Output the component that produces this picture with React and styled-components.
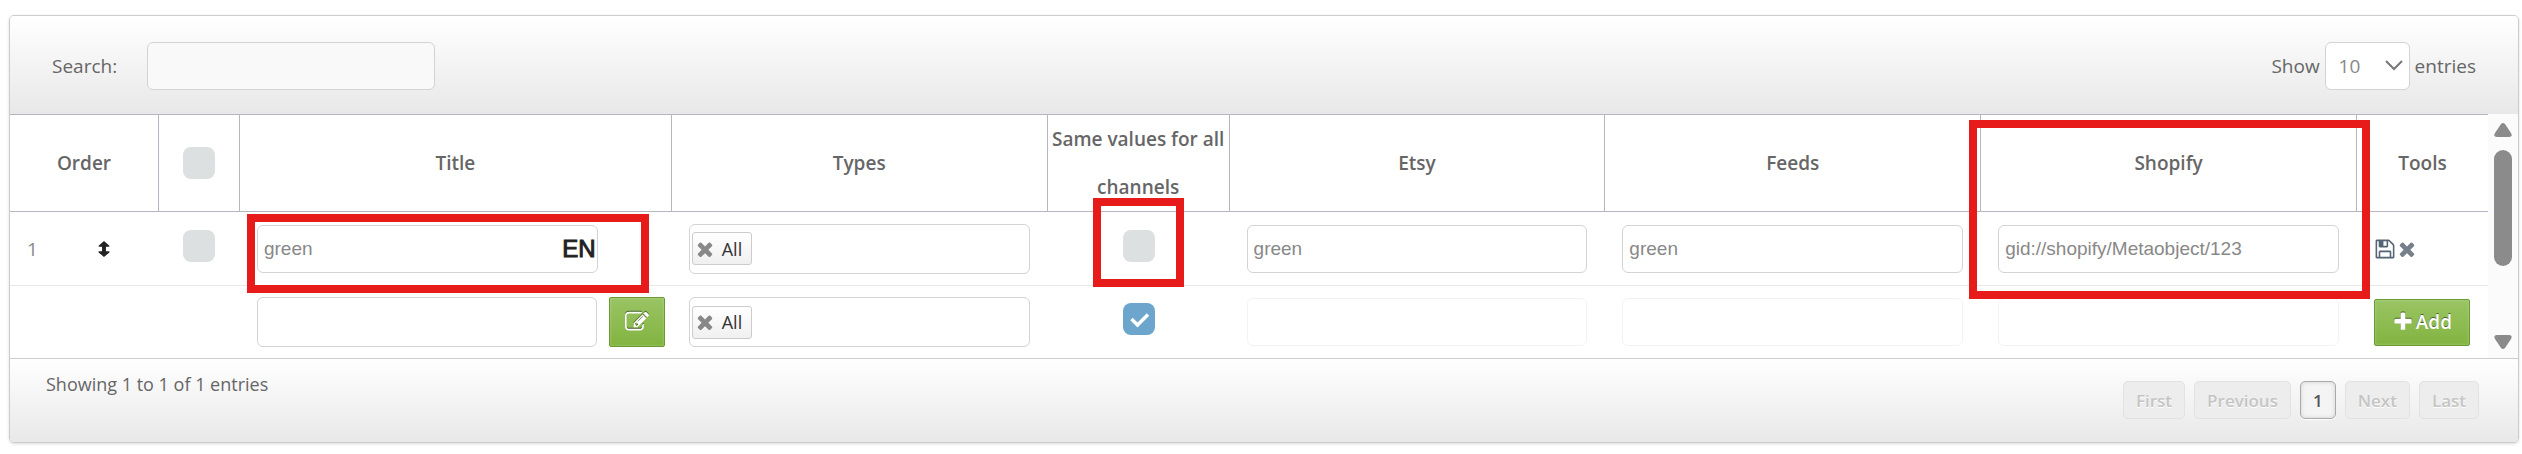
import React from "react";
import styled, { createGlobalStyle, css } from "styled-components";

const icons = {
  remove:
    "M1490 1322q0 40-28 68l-136 136q-28 28-68 28t-68-28l-294-294-294 294q-28 28-68 28t-68-28l-136-136q-28-28-28-68t28-68l294-294-294-294q-28-28-28-68t28-68l136-136q28-28 68-28t68 28l294 294 294-294q28-28 68-28t68 28l136 136q28 28 28 68t-28 68l-294 294 294 294q28 28 28 68z",
  save:
    "M512 1536h768v-384h-768v384zm896 0h128v-896q0-14-10-38.5t-20-34.5l-281-281q-10-10-34-20t-39-10v416q0 40-28 68t-68 28h-576q-40 0-68-28t-28-68v-416h-128v1280h128v-416q0-40 28-68t68-28h832q40 0 68 28t28 68v416zm-384-928v-320q0-13-9.5-22.5t-22.5-9.5h-192q-13 0-22.5 9.5t-9.5 22.5v320q0 13 9.5 22.5t22.5 9.5h192q13 0 22.5-9.5t9.5-22.5zm640 32v928q0 40-28 68t-68 28h-1344q-40 0-68-28t-28-68v-1344q0-40 28-68t68-28h928q40 0 88 20t76 48l280 280q28 28 48 76t20 88z",
  edit:
    "M888 1184l116-116-152-152-116 116v56h96v96h56zm440-720q-16-16-33 1l-350 350q-17 17-1 33t33-1l350-350q17-17 1-33zm80 594v190q0 119-84.5 203.5t-203.5 84.5h-832q-119 0-203.5-84.5t-84.5-203.5v-832q0-119 84.5-203.5t203.5-84.5h832q63 0 117 25 15 7 18 23 3 17-9 29l-49 49q-14 14-32 8-23-6-45-6h-832q-66 0-113 47t-47 113v832q0 66 47 113t113 47h832q66 0 113-47t47-113v-126q0-13 9-22l64-64q15-15 35-7t20 29zm-96-738l288 288-672 672h-288v-288zm444 132l-92 92-288-288 92-92q28-28 68-28t68 28l152 152q28 28 28 68t-28 68z",
  plus:
    "M1600 736v192q0 40-28 68t-68 28h-416v416q0 40-28 68t-68 28h-192q-40 0-68-28t-28-68v-416h-416q-40 0-68-28t-28-68v-192q0-40 28-68t68-28h416v-416q0-40 28-68t68-28h192q40 0 68 28t28 68v416h416q40 0 68 28t28 68z",
  move:
    "M896 96L1430 560Q1480 660 1380 670H1090V1122H1380Q1480 1132 1430 1232L896 1696L362 1232Q312 1132 412 1122H702V670H412Q312 660 362 560Z",
};

const Icon = ({ name, size = 22 }) => (
  <Glyph viewBox="0 0 1792 1792" $size={size} aria-hidden="true">
    <path d={icons[name]} fill="currentColor" stroke="currentColor" />
  </Glyph>
);

const TypesField = () => (
  <TagBox>
    <Tag>
      <RemoveTag type="button" aria-label="Remove All">
        <Icon name="remove" />
      </RemoveTag>
      All
    </Tag>
    <TagInput aria-label="Types" />
  </TagBox>
);

const App = () => (
  <Panel>
    <GlobalStyle />
    <Toolbar>
      <SearchLabel>
        Search:
        <SearchInput type="text" />
      </SearchLabel>
      <LengthLabel>
        Show
        <LengthSelect defaultValue="10">
          <option>10</option>
          <option>25</option>
          <option>50</option>
        </LengthSelect>
        entries
      </LengthLabel>
    </Toolbar>
    <Body>
      <Table>
        <colgroup>
          <Col $w={149} />
          <Col $w={81} />
          <Col $w={432} />
          <Col $w={376} />
          <Col $w={182} />
          <Col $w={376} />
          <Col $w={376} />
          <Col $w={376} />
          <Col $w={130} />
        </colgroup>
        <thead>
          <tr>
            <Th>Order</Th>
            <Th>
              <Check type="checkbox" aria-label="Select all" />
            </Th>
            <Th>Title</Th>
            <Th>Types</Th>
            <Th>Same values for all channels</Th>
            <Th>Etsy</Th>
            <Th>Feeds</Th>
            <Th>
              Shopify
              <ColumnMark />
            </Th>
            <Th>Tools</Th>
          </tr>
        </thead>
        <tbody>
          <Row>
            <Td>
              <Order>
                1
                <Icon name="move" size={18} />
              </Order>
            </Td>
            <CheckTd>
              <Check type="checkbox" aria-label="Select row 1" />
            </CheckTd>
            <Td>
              <TitleField>
                <Field type="text" aria-label="Title" defaultValue="green" />
                <Language>EN</Language>
              </TitleField>
              <TitleMark />
            </Td>
            <Td>
              <TypesField />
            </Td>
            <CheckTd>
              <Check type="checkbox" aria-label="Same values for all channels" />
              <CheckMark />
            </CheckTd>
            <Td>
              <Field type="text" aria-label="Etsy" defaultValue="green" />
            </Td>
            <Td>
              <Field type="text" aria-label="Feeds" defaultValue="green" />
            </Td>
            <Td>
              <Field
                type="text"
                aria-label="Shopify"
                defaultValue="gid://shopify/Metaobject/123"
              />
            </Td>
            <Td>
              <Tools>
                <ToolButton type="button" aria-label="Save">
                  <Icon name="save" />
                </ToolButton>
                <ToolButton type="button" aria-label="Delete" $muted>
                  <Icon name="remove" />
                </ToolButton>
              </Tools>
            </Td>
          </Row>
          <Row>
            <Td />
            <Td />
            <Td>
              <NewTitle>
                <Field type="text" aria-label="New title" $tall />
                <EditButton type="button" aria-label="Edit translations">
                  <Icon name="edit" size={24} />
                </EditButton>
              </NewTitle>
            </Td>
            <Td>
              <TypesField />
            </Td>
            <CheckTd>
              <Check
                type="checkbox"
                aria-label="Same values for all channels"
                defaultChecked
              />
            </CheckTd>
            <Td>
              <Field type="text" aria-label="New Etsy value" disabled />
            </Td>
            <Td>
              <Field type="text" aria-label="New Feeds value" disabled />
            </Td>
            <Td>
              <Field type="text" aria-label="New Shopify value" disabled />
            </Td>
            <Td>
              <AddButton type="button">
                <Icon name="plus" />
                Add
              </AddButton>
            </Td>
          </Row>
        </tbody>
      </Table>
      <Scrollbar>
        <Arrow viewBox="0 0 18 14">
          <path d="M7 1Q9-1 11 1L17 10Q19 14 15 14H3Q-1 14 1 10Z" fill="#8b8b8b" />
        </Arrow>
        <Thumb />
        <Arrow viewBox="0 0 18 14">
          <path d="M7 13Q9 15 11 13L17 4Q19 0 15 0H3Q-1 0 1 4Z" fill="#8b8b8b" />
        </Arrow>
      </Scrollbar>
    </Body>
    <Footer>
      <Info>Showing 1 to 1 of 1 entries</Info>
      <Pager>
        <PageButton type="button" disabled>First</PageButton>
        <PageButton type="button" disabled>Previous</PageButton>
        <PageButton type="button">1</PageButton>
        <PageButton type="button" disabled>Next</PageButton>
        <PageButton type="button" disabled>Last</PageButton>
      </Pager>
    </Footer>
  </Panel>
);

export default App;

const GlobalStyle = createGlobalStyle`
  * {
    box-sizing: border-box;
  }

  body {
    margin: 0;
    background: #fff;
    color: #666;
    font-family: "Open Sans", sans-serif;
    font-size: 19px;
  }

  button,
  input,
  select {
    font: inherit;
    color: inherit;
  }
`;

const bar = css`
  display: flex;
  justify-content: space-between;
  background: linear-gradient(#fff, #e8e8e8);
`;

const box = css`
  border: 1px solid #d3d3d3;
  border-radius: 6px;
  background: #fff;
`;

const green = css`
  display: flex;
  align-items: center;
  justify-content: center;
  padding: 0;
  border: 1px solid #6a9a32;
  border-radius: 2px;
  background: linear-gradient(#9ac463, #82b440);
  box-shadow: inset 0 0 2px 1px rgba(255, 255, 255, 0.15);
  color: #fff;

  svg {
    filter: drop-shadow(0 -1px 0 rgba(0, 0, 0, 0.5));
  }
`;

const Panel = styled.div`
  margin: 15px 3px 11px 9px;
  border: 1px solid #ccc;
  border-radius: 5px;
  box-shadow: 0 1px 3px rgba(0, 0, 0, 0.15);
  overflow: hidden;
`;

const Toolbar = styled.div`
  ${bar}
  padding: 26px 42px 24px;
  line-height: 24px;
`;

const SearchLabel = styled.label`
  display: flex;
  align-items: center;
  gap: 30px;
`;

const SearchInput = styled.input`
  ${box}
  width: 288px;
  height: 48px;
  padding: 0 8px;
  background: #f9f9f9;
`;

const LengthLabel = styled.label`
  display: flex;
  align-items: center;
  gap: 5px;
`;

const LengthSelect = styled.select`
  ${box}
  appearance: none;
  width: 85px;
  height: 48px;
  padding: 0 30px 0 13px;
  background: #fff
    url("data:image/svg+xml,%3Csvg xmlns='http://www.w3.org/2000/svg' width='18' height='12'%3E%3Cpath d='M1 1l8 8 8-8' fill='none' stroke='%23777' stroke-width='2'/%3E%3C/svg%3E")
    no-repeat right 6px center;
  color: #888;
`;

const Body = styled.div`
  display: flex;
  border-bottom: 1px solid #ccc;
`;

const Table = styled.table`
  flex: 1;
  table-layout: fixed;
  border-collapse: separate;
  border-spacing: 0;
`;

const Col = styled.col`
  width: ${p => p.$w}px;
`;

const Th = styled.th`
  position: relative;
  height: 98px;
  padding: 0;
  border: 1px solid #b5b6c2;
  border-width: 1px 1px 1px 0;
  font-weight: 600;
  line-height: 48px;

  &:last-child {
    border-right: 0;
  }
`;

const Row = styled.tr`
  & + & td {
    border-top: 1px solid #e8e8e8;
  }
`;

const Td = styled.td`
  position: relative;
  height: 73px;
  padding: 0 18px 0 17px;
`;

const CheckTd = styled(Td)`
  padding: 0 0 6px;
`;

const Check = styled.input`
  appearance: none;
  display: block;
  width: 32px;
  height: 32px;
  margin: 0 auto;
  border-radius: 8px;
  background: #dce0e0;

  &:checked {
    background: #6ca6cd
      url("data:image/svg+xml,%3Csvg xmlns='http://www.w3.org/2000/svg' viewBox='0 0 32 32'%3E%3Cpath d='M8.5 16l6 6L25 11.500' fill='none' stroke='white' stroke-width='3.500'/%3E%3C/svg%3E");
  }
`;

const Glyph = styled.svg`
  flex: none;
  width: ${p => p.$size}px;
  height: ${p => p.$size}px;
`;

const Order = styled.div`
  display: flex;
  align-items: center;
  gap: 57px;
  color: #888;

  svg {
    color: #222;
  }
`;

const Field = styled.input`
  ${box}
  display: block;
  width: 100%;
  height: ${p => (p.$tall ? 50 : 48)}px;
  padding: 0 6px;
  color: #888;
  font-family: "Liberation Sans", Arial, sans-serif;

  &:disabled {
    border-color: #f3f3f3;
  }
`;

const TitleField = styled.div`
  position: relative;
  margin-right: 56px;
`;

const Language = styled.span`
  position: absolute;
  top: 12px;
  right: 2px;
  color: #222;
  font: 24px/24px "Liberation Sans", Arial, sans-serif;
  -webkit-text-stroke: 1px;
`;

const NewTitle = styled.div`
  display: flex;
  gap: 12px;
  margin-right: -11px;
`;

const EditButton = styled.button`
  ${green}
  flex: none;
  width: 56px;
  height: 50px;
`;

const TagBox = styled.div`
  ${box}
  display: flex;
  align-items: center;
  height: 50px;
  padding: 0 2px;
`;

const Tag = styled.span`
  display: flex;
  align-items: center;
  gap: 6px;
  height: 33px;
  padding: 0 9px 0 1px;
  border: 1px solid #ccc;
  border-radius: 3px;
  background: linear-gradient(#fff, #f0f0f0);
  color: #333;
  font-size: 18px;
`;

const RemoveTag = styled.button`
  display: flex;
  padding: 0;
  border: 0;
  background: none;
  color: #888;
`;

const TagInput = styled.input`
  flex: 1;
  min-width: 0;
  border: 0;
  background: none;
`;

const Tools = styled.div`
  display: flex;
  align-items: center;
`;

const ToolButton = styled.button`
  display: flex;
  padding: 0;
  border: 0;
  background: none;
  color: ${p => (p.$muted ? "#77808a" : "#556575")};
`;

const AddButton = styled.button`
  ${green}
  gap: 2px;
  width: 96px;
  height: 47px;
  font-weight: 600;
  text-shadow: 0 -1px 0 rgba(0, 0, 0, 0.5);
`;

const mark = css`
  position: absolute;
  z-index: 1;
  border: 8px solid #e81b1b;
  pointer-events: none;
`;

const TitleMark = styled.span`
  ${mark}
  inset: 2px 23px -8px 7px;
`;

const CheckMark = styled.span`
  ${mark}
  inset: -14px 46px -2px 45px;
`;

const ColumnMark = styled.span`
  ${mark}
  inset: 5px -14px -88px -12px;
`;

const Scrollbar = styled.div`
  display: flex;
  flex-direction: column;
  align-items: center;
  width: 30px;
  padding: 9px 0;
  background: #fbfbfb;
`;

const Arrow = styled.svg`
  width: 18px;
  height: 14px;
`;

const Thumb = styled.div`
  width: 18px;
  height: 116px;
  margin: 13px 0 auto;
  border-radius: 9px;
  background: #8b8b8b;
`;

const Footer = styled.div`
  ${bar}
  height: 83px;
  padding: 0 39px 0 36px;
`;

const Info = styled.div`
  padding-top: 13px;
  font-size: 18px;
`;

const Pager = styled.div`
  display: flex;
  gap: 9px;
  padding-top: 22px;
`;

const PageButton = styled.button`
  height: 38px;
  padding: 0 12px;
  border: 1px solid #aaa;
  border-radius: 5px;
  background: #f4f4f4;
  box-shadow: inset 0 0 4px rgba(0, 0, 0, 0.15), 0 1px 0 #fff;
  color: #555;
  font-size: 17px;
  font-weight: 600;
  text-shadow: 0 1px 0 #fff;

  &:disabled {
    border-color: #e2e2e2;
    background: #ededed;
    box-shadow: none;
    color: #c5c5c5;
  }
`;
